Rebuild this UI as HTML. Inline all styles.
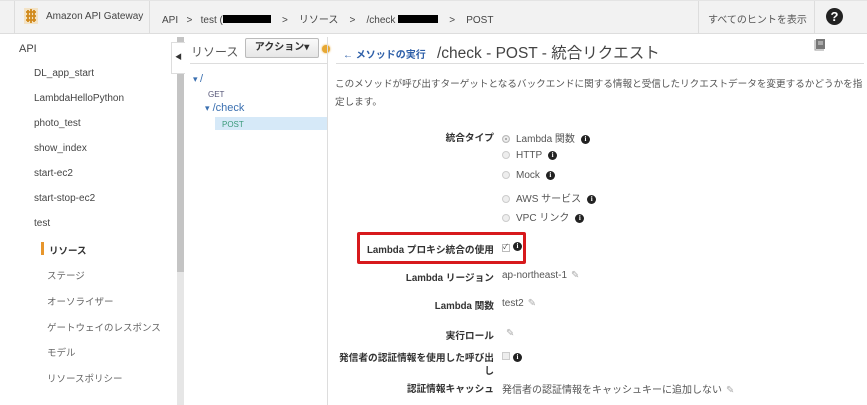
<!DOCTYPE html>
<html><head><meta charset="utf-8">
<style>
*{margin:0;padding:0;box-sizing:border-box}
body{width:867px;height:405px;overflow:hidden;background:#fff;font-family:"Liberation Sans","Noto Sans CJK JP",sans-serif;color:#444;position:relative}
.a{position:absolute;white-space:nowrap}
.top{position:absolute;left:0;top:0;width:867px;height:34px;background:#f2f2f2;border-bottom:1px solid #ddd;border-top:1px solid #e4e4e4}
.side{font-size:10px;color:#444}
.jp{font-size:9.5px;color:#666}
.info{display:inline-block;width:9px;height:9px;border-radius:50%;background:#222;color:#fff;font-size:7px;line-height:9px;text-align:center;font-weight:bold;vertical-align:1px;margin-left:6px;font-family:"Liberation Serif",serif}
.radio{display:inline-block;width:8px;height:8px;border-radius:50%;border:1px solid #ccc;background:#eee;margin-right:6px;vertical-align:-1px}
.lbl{font-size:9.7px;font-weight:bold;color:#333;text-align:right;width:170px}
.val{font-size:10px;color:#555}
.pen{color:#aaa;font-size:10px;margin-left:4px}
</style></head><body>
<div class="top"></div>
<div class="a" style="left:14px;top:1px;width:1px;height:32px;background:#ddd"></div>
<div class="a" style="left:149px;top:1px;width:1px;height:32px;background:#ddd"></div>
<svg class="a" style="left:24px;top:8px" width="14" height="16" viewBox="0 0 14 16"><rect x="0" y="0" width="14" height="16" fill="#f3e2c4"/><path d="M7 1v14M2 4h10M2 8h10M2 12h10M4 2v12M10 2v12" stroke="#d18a1c" stroke-width="1.8"/></svg>
<div class="a" style="left:46px;top:11px;font-size:10px;color:#444">Amazon API Gateway</div>
<div class="a" style="left:162px;top:11px;font-size:10px;color:#444">API &nbsp;&nbsp;&gt;&nbsp;&nbsp; test (<span style="display:inline-block;width:48px;height:8px;background:#000;vertical-align:0"></span>&nbsp;&nbsp;&nbsp; &gt; &nbsp;&nbsp;&nbsp;リソース &nbsp;&nbsp;&nbsp;&gt;&nbsp;&nbsp;&nbsp; /check <span style="display:inline-block;width:40px;height:8px;background:#000;vertical-align:0"></span> &nbsp;&nbsp;&nbsp;&gt;&nbsp;&nbsp;&nbsp; POST</div>
<div class="a" style="left:698px;top:1px;width:1px;height:32px;background:#ddd"></div>
<div class="a" style="left:708px;top:11px;font-size:10px;color:#555">すべてのヒントを表示</div>
<div class="a" style="left:814px;top:1px;width:1px;height:32px;background:#ddd"></div>
<div class="a" style="left:826px;top:8px;width:17px;height:17px;border-radius:50%;background:#222;color:#fff;font-size:13px;font-weight:bold;text-align:center;line-height:17px">?</div>

<div class="a side" style="left:19px;top:43px;font-size:11px">API</div>
<div class="a side" style="left:34px;top:68px">DL_app_start</div>
<div class="a side" style="left:34px;top:93px">LambdaHelloPython</div>
<div class="a side" style="left:34px;top:118px">photo_test</div>
<div class="a side" style="left:34px;top:143px">show_index</div>
<div class="a side" style="left:34px;top:168px">start-ec2</div>
<div class="a side" style="left:34px;top:193px">start-stop-ec2</div>
<div class="a side" style="left:34px;top:218px">test</div>
<div class="a" style="left:41px;top:242px;width:3px;height:13px;background:#e7962c"></div>
<div class="a jp" style="left:49px;top:243px;font-weight:bold;color:#333">リソース</div>
<div class="a jp" style="left:47px;top:268px">ステージ</div>
<div class="a jp" style="left:47px;top:294px">オーソライザー</div>
<div class="a jp" style="left:47px;top:320px">ゲートウェイのレスポンス</div>
<div class="a jp" style="left:47px;top:345px">モデル</div>
<div class="a jp" style="left:47px;top:371px">リソースポリシー</div>
<div class="a" style="left:177px;top:37px;width:7px;height:368px;background:#e6e6e6"></div>
<div class="a" style="left:177px;top:37px;width:7px;height:235px;background:#c4c4c4"></div>
<div class="a" style="left:171px;top:42px;width:14px;height:32px;background:#fff;border:1px solid #ddd;border-right:none;font-size:7px;color:#333;line-height:30px;text-align:center">◀</div>

<div class="a" style="left:191px;top:43px;font-size:12px;color:#555">リソース</div>
<div class="a" style="left:245px;top:38px;width:74px;height:20px;background:linear-gradient(#fafafa,#e6e6e6);border:1px solid #bbb;border-radius:2px;font-size:10px;font-weight:bold;color:#333;text-align:center;line-height:18px">アクション▾</div>
<div class="a" style="left:322px;top:45px;width:8px;height:8px;border-radius:50%;background:#e7a833;box-shadow:0 0 2px #e7a833"></div>
<div class="a" style="left:190px;top:63px;width:137px;height:1px;background:#ddd"></div>
<div class="a" style="left:193px;top:73px;font-size:9px;color:#3a6fb0">▾ <span style="font-size:11px">/</span></div>
<div class="a" style="left:208px;top:90px;font-size:8px;color:#557">GET</div>
<div class="a" style="left:205px;top:102px;font-size:11px;color:#3a6fb0"><span style="font-size:9px">▾</span> /check</div>
<div class="a" style="left:215px;top:117px;width:112px;height:13px;background:#d6e9f8"></div>
<div class="a" style="left:222px;top:120px;font-size:8px;color:#3b9a7a">POST</div>
<div class="a" style="left:327px;top:37px;width:1px;height:368px;background:#ddd"></div>

<div class="a" style="left:343px;top:46px;font-size:10px;color:#2e5fa8;font-weight:bold">← メソッドの実行</div>
<div class="a" style="left:437px;top:41px;font-size:15.5px;color:#444">/check - POST - 統合リクエスト</div>
<svg class="a" style="left:814px;top:38px" width="12" height="13" viewBox="0 0 12 13"><path d="M2 1h9v10H2z" fill="#777"/><path d="M1 2v10h9" stroke="#999" fill="none"/><path d="M4 4h5M4 6h5" stroke="#ddd"/></svg>
<div class="a" style="left:336px;top:63px;width:528px;height:1px;background:#ddd"></div>
<div class="a" style="left:335px;top:76px;font-size:9.6px;color:#555;line-height:18px">このメソッドが呼び出すターゲットとなるバックエンドに関する情報と受信したリクエストデータを変更するかどうかを指<br>定します。</div>

<div class="a lbl" style="left:324px;top:130px">統合タイプ</div>
<div class="a val" style="left:502px;top:130px"><span class="radio" style="background:#999;border-color:#bbb;box-shadow:inset 0 0 0 2px #eee"></span>Lambda 関数<span class="info">i</span></div>
<div class="a val" style="left:502px;top:150px"><span class="radio"></span>HTTP<span class="info">i</span></div>
<div class="a val" style="left:502px;top:170px"><span class="radio"></span>Mock<span class="info">i</span></div>
<div class="a val" style="left:502px;top:190px"><span class="radio"></span>AWS サービス<span class="info">i</span></div>
<div class="a val" style="left:502px;top:209px"><span class="radio"></span>VPC リンク<span class="info">i</span></div>

<div class="a" style="left:357px;top:232px;width:169px;height:32px;border:3px solid #d7191c;border-radius:2px"></div>
<div class="a lbl" style="left:324px;top:242px">Lambda プロキシ統合の使用</div>
<div class="a val" style="left:502px;top:241px"><span style="display:inline-block;width:8px;height:8px;border:1px solid #bbb;font-size:7px;line-height:6px;color:#333">✓</span><span class="info" style="margin-left:3px">i</span></div>
<div class="a lbl" style="left:324px;top:270px">Lambda リージョン</div>
<div class="a val" style="left:502px;top:270px">ap-northeast-1<span class="pen">✎</span></div>
<div class="a lbl" style="left:324px;top:298px">Lambda 関数</div>
<div class="a val" style="left:502px;top:298px">test2<span class="pen">✎</span></div>
<div class="a lbl" style="left:324px;top:328px">実行ロール</div>
<div class="a val" style="left:502px;top:328px"><span class="pen">✎</span></div>
<div class="a lbl" style="left:324px;top:352px;line-height:13px">発信者の認証情報を使用した呼び出<br>し</div>
<div class="a val" style="left:502px;top:352px"><span style="display:inline-block;width:8px;height:8px;border:1px solid #ccc;background:#eee"></span><span class="info" style="margin-left:3px">i</span></div>
<div class="a lbl" style="left:324px;top:381px">認証情報キャッシュ</div>
<div class="a val" style="left:502px;top:381px">発信者の認証情報をキャッシュキーに追加しない<span class="pen">✎</span></div>
</body></html>
